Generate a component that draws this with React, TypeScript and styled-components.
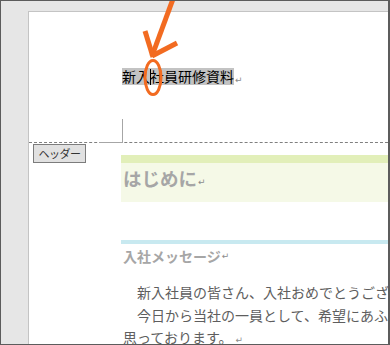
import React from "react";
import styled, { createGlobalStyle } from "styled-components";

const Global = createGlobalStyle`
  html, body { margin: 0; padding: 0; background: #ffffff; }
  body { font-family: "Noto Sans CJK JP", "Noto Sans", sans-serif; }
`;

const Frame = styled.div`
  position: relative;
  width: 390px;
  height: 345px;
  box-sizing: border-box;
  border: 1px solid #5c5c5c;
  border-right-width: 2px;
  background: #e6e6e6;
  padding: 10px 0 0 27px;
  display: flex;
  overflow: hidden;
`;

const Page = styled.div`
  flex: 1;
  min-width: 0;
  background: #ffffff;
  border-top: 1px solid #c4c4c4;
  border-left: 1px solid #c4c4c4;
  display: flex;
  flex-direction: column;
  overflow: hidden;
  & > * { flex-shrink: 0; }
`;

const HeaderArea = styled.div`
  height: 130px;
  padding-left: 93px;
  border-bottom: 1px dashed #808080;
  display: flex;
  flex-direction: column;
`;

const TitleRow = styled.div`
  margin-top: 56px;
  display: flex;
  align-items: center;
  white-space: nowrap;
`;

const Highlight = styled.span`
  display: inline-flex;
  align-items: center;
  height: 17px;
  background: #c3c3c3;
  color: #000000;
  font-size: 14px;
  line-height: 17px;
`;

const Caret = styled.span`
  display: inline-block;
  width: 1px;
  height: 16px;
  margin-right: -1px;
  background: #000000;
`;

const Mark = styled.span<{ $size?: number }>`
  color: #8c8c8c;
  font-family: "DejaVu Sans", sans-serif;
  font-size: ${(p) => p.$size ?? 9}px;
  margin-left: 1px;
  align-self: flex-end;
  line-height: 1;
`;

const CornerMark = styled.div`
  margin-top: auto;
  margin-bottom: -1px;
  margin-left: -23px;
  width: 24px;
  height: 24px;
  box-sizing: border-box;
  border-right: 1px solid #a6a6a6;
  border-bottom: 1px solid #a6a6a6;
`;

const Body = styled.div`
  position: relative;
  padding-left: 92px;
  display: flex;
  flex-direction: column;
`;

const HeaderTab = styled.div`
  position: absolute;
  left: 4px;
  top: 1px;
  width: 53px;
  height: 19px;
  box-sizing: border-box;
  border: 1px solid #7c7c7c;
  background: #e1e1e1;
  color: #333333;
  font-size: 11px;
  line-height: 17px;
  text-align: center;
  letter-spacing: -0.5px;
`;

const Heading1 = styled.div`
  margin-top: 12px;
  border-top: 8px solid #e2efb9;
  background: #f5f9e7;
  height: 39px;
  padding-left: 2px;
  display: flex;
  align-items: flex-start;
  white-space: nowrap;
`;

const Heading1Text = styled.span`
  font-size: 18.5px;
  font-weight: 700;
  color: #a6a6a6;
  line-height: 30px;
`;

const Heading2 = styled.div`
  margin-top: 38px;
  border-top: 4px solid #c8e9f0;
  padding-left: 2px;
  height: 24px;
  display: flex;
  align-items: center;
  white-space: nowrap;
`;

const Heading2Text = styled.span`
  font-size: 14px;
  font-weight: 700;
  color: #a6a6a6;
  line-height: 24px;
`;

const Paragraph = styled.p<{ $first?: boolean }>`
  margin: ${(p) => (p.$first ? "13px" : "0")} 0 0 0;
  padding-left: 2px;
  font-size: 14px;
  line-height: 22.5px;
  color: #5e5e5e;
  white-space: nowrap;
`;

const Indent = styled.span`
  display: inline-block;
  width: 14px;
`;

const InlineMark = styled.span`
  color: #8c8c8c;
  font-family: "DejaVu Sans", sans-serif;
  font-size: 9px;
  margin-left: 3px;
`;

const Overlay = styled.svg`
  position: absolute;
  left: 0;
  top: 0;
  width: 390px;
  height: 345px;
  pointer-events: none;
`;

export default function App() {
  return (
    <>
      <Global />
      <Frame>
        <Page>
          <HeaderArea>
            <TitleRow>
              <Highlight>
                新入<Caret />社員研修資料
              </Highlight>
              <Mark>↵</Mark>
            </TitleRow>
            <CornerMark />
          </HeaderArea>
          <Body>
            <HeaderTab>ヘッダー</HeaderTab>
            <Heading1>
              <Heading1Text>はじめに</Heading1Text>
              <Mark $size={9} style={{ alignSelf: "center" }}>↵</Mark>
            </Heading1>
            <Heading2>
              <Heading2Text>入社メッセージ</Heading2Text>
              <Mark $size={9} style={{ alignSelf: "center" }}>↵</Mark>
            </Heading2>
            <Paragraph $first>
              <Indent />新入社員の皆さん、入社おめでとうございます。
            </Paragraph>
            <Paragraph>
              <Indent />今日から当社の一員として、希望にあふれる皆さんと働けることを嬉しく
              <br />
              思っております。<InlineMark>↵</InlineMark>
            </Paragraph>
          </Body>
        </Page>
        <Overlay viewBox="0 0 390 345">
          <ellipse cx="152" cy="76.5" rx="8" ry="17" fill="none" stroke="#f26b21" strokeWidth="3" />
          <path d="M172 -2 L151 55" fill="none" stroke="#f26b21" strokeWidth="5" />
          <path d="M144 30 L152 56" fill="none" stroke="#f26b21" strokeWidth="5" />
          <path d="M176 42 L151 55" fill="none" stroke="#f26b21" strokeWidth="5" />
        </Overlay>
      </Frame>
    </>
  );
}
